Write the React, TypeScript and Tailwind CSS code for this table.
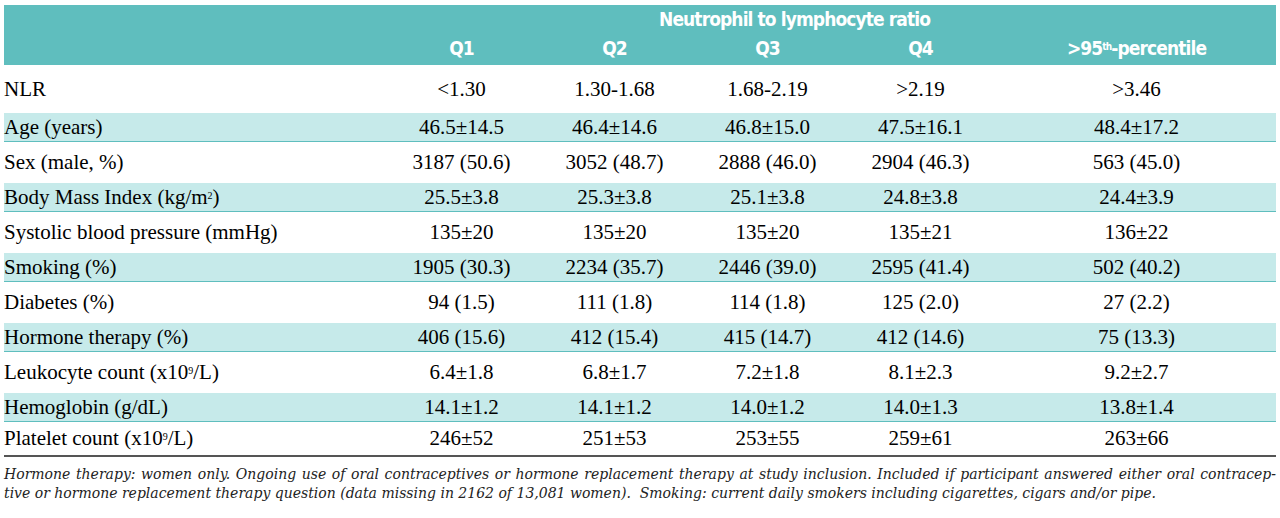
const rows: { label: React.ReactNode; values: string[] }[] = [
  { label: "Age (years)", values: ["46.5±14.5", "46.4±14.6", "46.8±15.0", "47.5±16.1", "48.4±17.2"] },
  { label: "Sex (male, %)", values: ["3187 (50.6)", "3052 (48.7)", "2888 (46.0)", "2904 (46.3)", "563 (45.0)"] },
  {
    label: (
      <>
        Body Mass Index (kg/m<sup className="text-[10px]">2</sup>)
      </>
    ),
    values: ["25.5±3.8", "25.3±3.8", "25.1±3.8", "24.8±3.8", "24.4±3.9"],
  },
  { label: "Systolic blood pressure (mmHg)", values: ["135±20", "135±20", "135±20", "135±21", "136±22"] },
  { label: "Smoking (%)", values: ["1905 (30.3)", "2234 (35.7)", "2446 (39.0)", "2595 (41.4)", "502 (40.2)"] },
  { label: "Diabetes (%)", values: ["94 (1.5)", "111 (1.8)", "114 (1.8)", "125 (2.0)", "27 (2.2)"] },
  { label: "Hormone therapy (%)", values: ["406 (15.6)", "412 (15.4)", "415 (14.7)", "412 (14.6)", "75 (13.3)"] },
  {
    label: (
      <>
        Leukocyte count (x10<sup className="text-[10px]">9</sup>/L)
      </>
    ),
    values: ["6.4±1.8", "6.8±1.7", "7.2±1.8", "8.1±2.3", "9.2±2.7"],
  },
  { label: "Hemoglobin (g/dL)", values: ["14.1±1.2", "14.1±1.2", "14.0±1.2", "14.0±1.3", "13.8±1.4"] },
  {
    label: (
      <>
        Platelet count (x10<sup className="text-[10px]">9</sup>/L)
      </>
    ),
    values: ["246±52", "251±53", "253±55", "259±61", "263±66"],
  },
];

const grid = "grid grid-cols-[381px_153px_153px_153px_153px_1fr] items-center";

export default function App() {
  return (
    <div className="h-[518px] w-[1280px] bg-white px-[4px] pt-[5px] text-black">
      {/* header */}
      <div className="bg-[#5fbebe] font-['DejaVu_Sans_Condensed','Liberation_Sans',sans-serif] font-bold tracking-[-0.9px] text-white">
        <div className="h-[27px] pl-[655px] pt-[1px] text-[19px] leading-[26px]">Neutrophil to lymphocyte ratio</div>
        <div className={`${grid} h-[33px] text-[19px]`}>
          <div />
          <div className="text-center">Q1</div>
          <div className="text-center">Q2</div>
          <div className="text-center">Q3</div>
          <div className="text-center">Q4</div>
          <div className="text-center">
            &gt;95<sup className="text-[10px]">th</sup>-percentile
          </div>
        </div>
      </div>

      <div className="font-['Liberation_Serif',serif] text-[21px] leading-none">
        <div className={`${grid} h-[48px]`}>
          <div>NLR</div>
          <div className="text-center">&lt;1.30</div>
          <div className="text-center">1.30-1.68</div>
          <div className="text-center">1.68-2.19</div>
          <div className="text-center">&gt;2.19</div>
          <div className="text-center">&gt;3.46</div>
        </div>

        {rows.map((r, i) => {
          const shaded = i % 2 === 0;
          const last = i === rows.length - 1;
          return (
            <div
              key={i}
              className={
                shaded
                  ? `${grid} h-[29px] border-b border-[#5fbebe] bg-[#c6eaea]`
                  : last
                    ? `${grid} h-[35px] border-b-2 border-[#555555]`
                    : `${grid} h-[41px]`
              }
            >
              <div className="whitespace-nowrap">{r.label}</div>
              {r.values.map((v, j) => (
                <div key={j} className="text-center whitespace-nowrap">
                  {v}
                </div>
              ))}
            </div>
          );
        })}
      </div>

      {/* footnote */}
      <div className="mt-[8px] font-['DejaVu_Serif',serif] text-[14px] italic leading-[19px] text-[#222222]">
        <div className="text-justify [text-align-last:justify]">
          Hormone therapy: women only. Ongoing use of oral contraceptives or hormone replacement therapy at study inclusion. Included if participant answered either oral contracep-
        </div>
        <div>
          tive or hormone replacement therapy question (data missing in 2162 of 13,081 women).&nbsp; Smoking: current daily smokers including cigarettes, cigars and/or pipe.
        </div>
      </div>
    </div>
  );
}
